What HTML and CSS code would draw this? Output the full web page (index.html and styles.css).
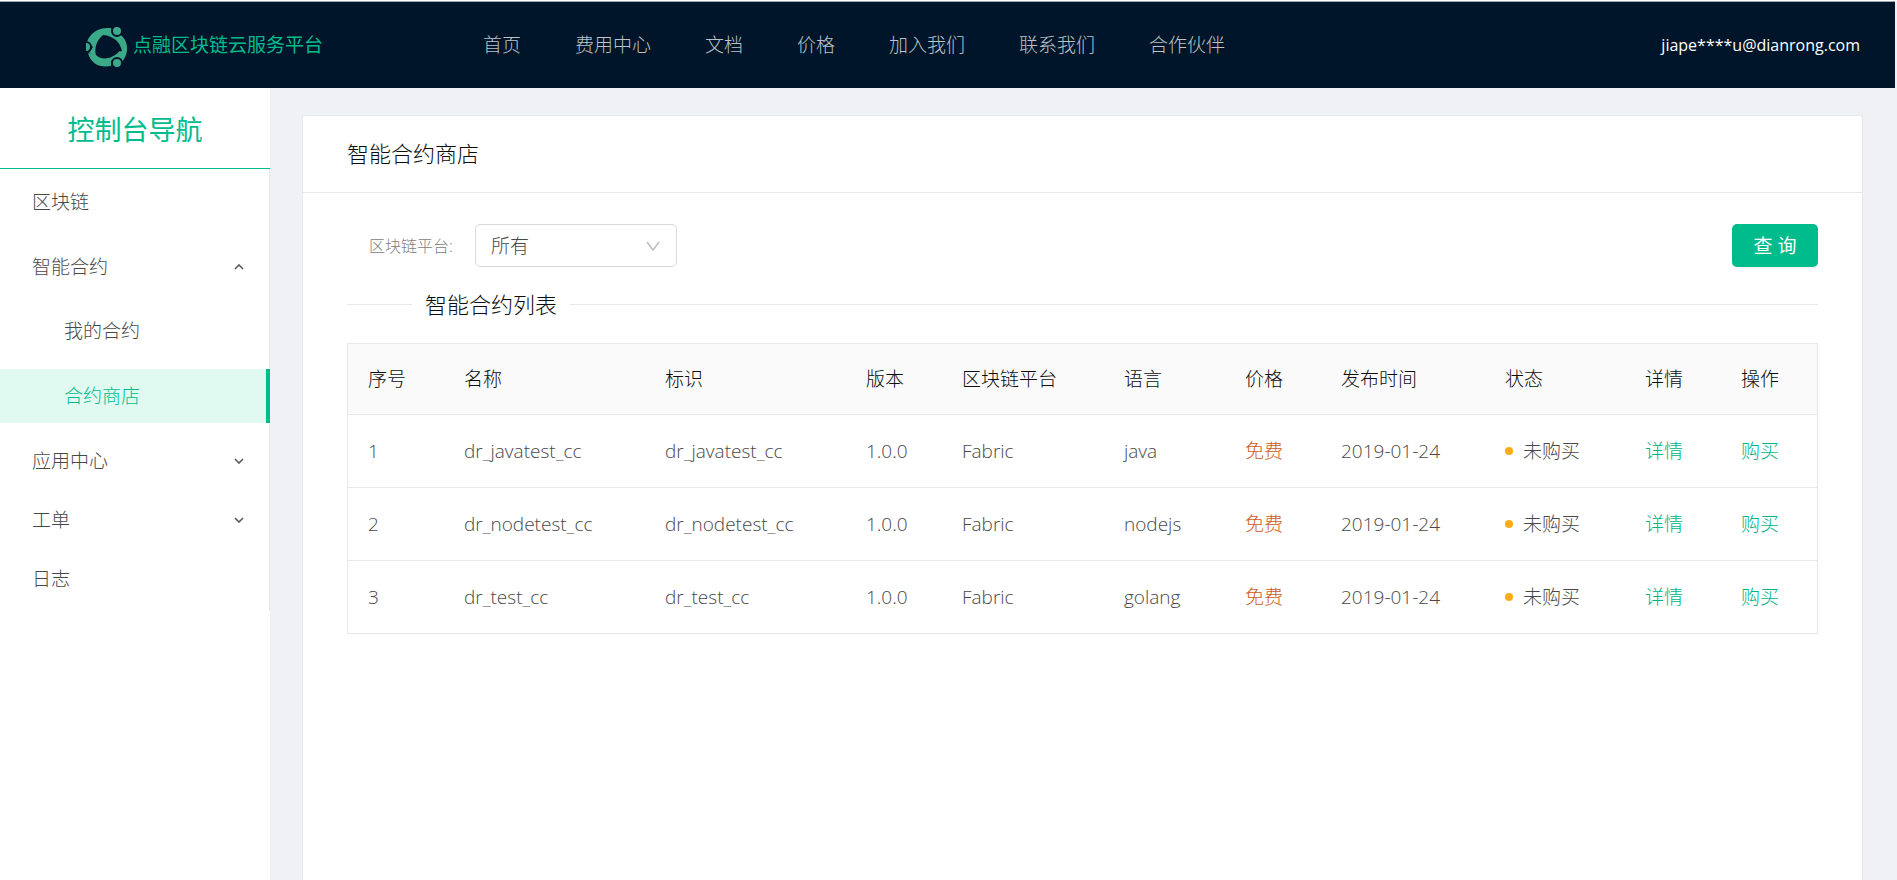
FILE: index.html
```html
<!DOCTYPE html>
<html lang="zh-CN">
<head>
<meta charset="utf-8">
<title>智能合约商店</title>
<link rel="stylesheet" href="styles.css">
</head>
<body>
<header class="topbar">
  <a class="brand" href="#">
    <svg class="brand-logo" viewBox="0 0 42 40" aria-hidden="true">
      <g fill="#3aaa88">
        <path d="M1 15C4 6 12 0 25 1L23 7L17 8C11 13 8 20 10 29L3 26L7 20Z"/>
        <path d="M17 8L25 1L28 8H35C43 15 43 27 36 35L36 32L32 25L36 24C34 15 28 9 17 8Z"/>
        <path d="M2 26L10 28C16 34 26 32 34 24L36 32H29L25 34V39C14 41 5 37 2 26Z"/>
      </g>
      <g fill="#3aaa88" stroke="#001529" stroke-width="2">
        <circle cx="31" cy="4" r="5"/>
        <circle cx="31" cy="36" r="5"/>
        <circle cx="0" cy="20" r="5"/>
      </g>
    </svg>
    <span>点融区块链云服务平台</span>
  </a>
  <nav class="topnav">
    <a href="#">首页</a>
    <a href="#">费用中心</a>
    <a href="#">文档</a>
    <a href="#">价格</a>
    <a href="#">加入我们</a>
    <a href="#">联系我们</a>
    <a href="#">合作伙伴</a>
  </nav>
  <a class="account" href="#">jiape****u@dianrong.com</a>
</header>
<div class="layout">
  <aside class="sidebar">
    <h2 class="sidebar-title">控制台导航</h2>
    <ul class="menu">
      <li><a class="menu-item" href="#">区块链</a></li>
      <li>
        <button class="menu-item parent" type="button" aria-expanded="true">智能合约
          <svg class="chevron" viewBox="0 0 10 6" aria-hidden="true"><path d="M1 5l4-4 4 4"/></svg>
        </button>
        <ul class="submenu">
          <li><a class="menu-item" href="#">我的合约</a></li>
          <li><a class="menu-item active" href="#" aria-current="page">合约商店</a></li>
        </ul>
      </li>
      <li class="closed">
        <button class="menu-item" type="button" aria-expanded="false">应用中心
          <svg class="chevron" viewBox="0 0 10 6" aria-hidden="true"><path d="M1 1l4 4 4-4"/></svg>
        </button>
      </li>
      <li class="closed">
        <button class="menu-item" type="button" aria-expanded="false">工单
          <svg class="chevron" viewBox="0 0 10 6" aria-hidden="true"><path d="M1 1l4 4 4-4"/></svg>
        </button>
      </li>
      <li class="closed"><a class="menu-item" href="#">日志</a></li>
    </ul>
  </aside>
  <main class="content">
    <section class="card">
      <h1 class="card-head">智能合约商店</h1>
      <div class="card-body">
        <form class="filter">
          <label for="platform">区块链平台:</label>
          <div class="select-wrap">
            <select id="platform"><option>所有</option></select>
            <svg class="select-arrow" viewBox="0 0 14 10" aria-hidden="true"><path d="M1 1l6 8 6-8"/></svg>
          </div>
          <button class="query" type="button">查 询</button>
        </form>
        <h2 class="divider">智能合约列表</h2>
        <table class="grid">
          <colgroup>
            <col class="w-no"><col class="w-name"><col class="w-name"><col class="w-no"><col class="w-platform"><col class="w-lang"><col class="w-no"><col class="w-date"><col class="w-status"><col class="w-no"><col class="w-no">
          </colgroup>
          <thead>
            <tr><th>序号</th><th>名称</th><th>标识</th><th>版本</th><th>区块链平台</th><th>语言</th><th>价格</th><th>发布时间</th><th>状态</th><th>详情</th><th>操作</th></tr>
          </thead>
          <tbody>
            <tr><td>1</td><td>dr_javatest_cc</td><td>dr_javatest_cc</td><td>1.0.0</td><td>Fabric</td><td>java</td><td class="price">免费</td><td>2019-01-24</td><td><span class="status">未购买</span></td><td><a href="#">详情</a></td><td><a href="#">购买</a></td></tr>
            <tr><td>2</td><td>dr_nodetest_cc</td><td>dr_nodetest_cc</td><td>1.0.0</td><td>Fabric</td><td>nodejs</td><td class="price">免费</td><td>2019-01-24</td><td><span class="status">未购买</span></td><td><a href="#">详情</a></td><td><a href="#">购买</a></td></tr>
            <tr><td>3</td><td>dr_test_cc</td><td>dr_test_cc</td><td>1.0.0</td><td>Fabric</td><td>golang</td><td class="price">免费</td><td>2019-01-24</td><td><span class="status">未购买</span></td><td><a href="#">详情</a></td><td><a href="#">购买</a></td></tr>
          </tbody>
        </table>
      </div>
    </section>
  </main>
</div>
</body>
</html>
```

FILE: styles.css
```css
* { box-sizing: border-box; }

body {
  margin: 0;
  min-height: 100vh;
  display: flex;
  flex-direction: column;
  padding-right: 2px;
  border-top: 1px solid #fff;
  background: #f0f1f5;
  color: #484848;
  font-family: "Open Sans", "Noto Sans CJK SC", sans-serif;
  font-size: 19px;
  font-weight: 300;
  line-height: 28px;
}

a { color: inherit; text-decoration: none; }
h1, h2, ul { margin: 0; padding: 0; font-weight: inherit; }
ul { list-style: none; }
button, select { font: inherit; color: inherit; }

.topbar {
  display: flex;
  align-items: center;
  height: 87px;
  padding: 0 35px 0 86px;
  border-top: 1px solid #a3a8b0;
  background: #001529;
}
.brand {
  display: flex;
  align-items: center;
  gap: 5px;
  width: 397px;
  color: #00bc8c;
  font-weight: 400;
}
.brand-logo { width: 42px; height: 40px; margin-top: 4px; }
.topnav { display: flex; gap: 54px; color: #bcc2c8; white-space: nowrap; }
.account { margin-left: auto; color: #fff; font-size: 16px; font-weight: 400; }

.layout { display: flex; flex: 1; }

.sidebar { flex: none; width: 270px; background: #fff; }
.sidebar-title {
  height: 81px;
  border-bottom: 1px solid #00bc8c;
  color: #00bc8c;
  font-size: 27px;
  font-weight: 400;
  line-height: 84px;
  text-align: center;
}
.menu { display: flow-root; padding-top: 6px; border-right: 1px solid #e8e8e8; }
.menu-item {
  display: flex;
  align-items: center;
  justify-content: space-between;
  width: 100%;
  height: 54px;
  margin-bottom: 11px;
  padding: 0 25px 0 32px;
  border: 0;
  background: none;
}
.menu-item.parent { margin-bottom: 10px; }
.closed .menu-item { margin-bottom: 5px; }
.submenu .menu-item { padding-left: 64px; }
.menu-item.active {
  width: calc(100% + 1px);
  border-right: 4px solid #00bc8c;
  background: #e1faf1;
  color: #00bc8c;
}
.chevron { width: 10px; height: 6px; fill: none; stroke: #595959; stroke-width: 1.6; }

.content { display: flex; flex: 1; min-width: 0; padding: 27px 32px 0; }
.card {
  flex: 1;
  min-width: 0;
  border: 1px solid #e8e8e8;
  border-bottom: 0;
  border-radius: 3px 3px 0 0;
  background: #fff;
}
.card-head {
  padding: 21px 44px 22px;
  border-bottom: 1px solid #e8e8e8;
  color: #0c0c0c;
  font-size: 22px;
  line-height: 33px;
}
.card-body { padding: 31px 44px; }

.filter { display: flex; align-items: center; padding-left: 22px; }
.filter label { width: 106px; color: #808080; font-size: 16px; }
.select-wrap { position: relative; width: 202px; }
.select-wrap select {
  display: block;
  width: 100%;
  height: 43px;
  padding: 0 15px;
  border: 1px solid #d9d9d9;
  border-radius: 5px;
  background: #fff;
  appearance: none;
}
.select-arrow {
  position: absolute;
  top: 17px;
  right: 17px;
  width: 14px;
  height: 10px;
  fill: none;
  stroke: #bfbfbf;
  stroke-width: 1.5;
  pointer-events: none;
}
.query {
  width: 86px;
  height: 43px;
  margin-left: auto;
  padding: 0;
  border: 0;
  border-radius: 5px;
  background: #00bc8c;
  box-shadow: 0 2px 0 rgba(0, 0, 0, 0.04);
  color: #fff;
  font-weight: 400;
}

.divider {
  display: flex;
  align-items: center;
  gap: 13px;
  margin: 21px 0 22px;
  color: #0c0c0c;
  font-size: 22px;
  line-height: 33px;
}
.divider::before, .divider::after { content: ""; height: 1px; background: #e8e8e8; }
.divider::before { width: 65px; }
.divider::after { flex: 1; }

.grid {
  width: 100%;
  table-layout: fixed;
  border: 1px solid #e8e8e8;
  border-bottom: 0;
  border-spacing: 0;
}
.grid th, .grid td {
  padding: 22px 0 22px 20px;
  border-bottom: 1px solid #e8e8e8;
  text-align: left;
}
.grid th { padding: 21px 0 21px 20px; background: #fafafa; color: #0c0c0c; font-weight: 300; }
.grid a { color: #00b385; }
.grid .price { color: #d05a1c; }
.w-no { width: 96px; }
.w-name { width: 201px; }
.w-platform { width: 162px; }
.w-lang { width: 121px; }
.w-date { width: 164px; }
.w-status { width: 140px; }
.status { display: flex; align-items: center; gap: 10px; }
.status::before { content: ""; width: 8px; height: 8px; border-radius: 50%; background: #faad14; }
```
